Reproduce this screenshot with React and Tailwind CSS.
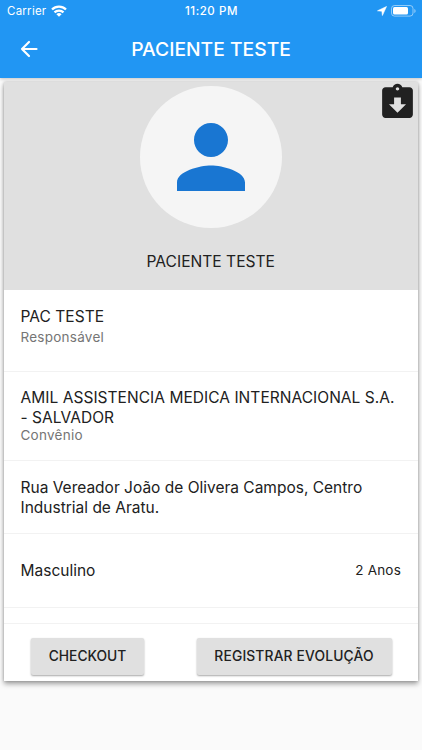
import React from "react";

function StatusBar() {
  return (
    <div className="flex h-[22px] items-center justify-between pl-[7px] pr-[6px] text-[11.5px] leading-[22px]">
      <div className="flex w-[120px] items-center gap-[5px]">
        <span className="tracking-[0.25px]">Carrier</span>
        <svg width="16" height="12" viewBox="0 0 16 12" fill="none" stroke="currentColor" strokeWidth="2.3">
          <path d="M1 4.5a10 10 0 0 1 14 0" />
          <path d="M3.5 7.4a6.4 6.4 0 0 1 9 0" />
          <path d="M8 11.8 5.4 9.3a3.7 3.7 0 0 1 5.2 0Z" fill="currentColor" stroke="none" />
        </svg>
      </div>
      <span className="font-medium tracking-[0.55px]">11:20 PM</span>
      <div className="flex w-[120px] items-center justify-end gap-[4px]">
        <svg width="10" height="10" viewBox="0 0 10 10" fill="currentColor" stroke="currentColor" strokeWidth="0.6" strokeLinejoin="round">
          <path d="M9.500.500 5.400 9.500 4.900 5.200.500 4.800Z" />
        </svg>
        <svg width="25" height="12" viewBox="0 0 25 12" fill="none">
          <rect x="0.5" y="0.5" width="21.5" height="10.6" rx="3" stroke="#fff" strokeOpacity="0.5" />
          <rect x="2" y="2" width="15" height="7.6" rx="1.5" fill="#fff" />
          <path d="M23.3 4v4c.8-.4 1.3-1.1 1.3-2s-.5-1.600-1.300-2Z" fill="#fff" fillOpacity="0.5" />
        </svg>
      </div>
    </div>
  );
}

function AppBar() {
  return (
    <header className="relative z-10 h-[77.5px] shrink-0 bg-[#2196f3] text-white shadow-[0_1px_3px_rgba(0,0,0,0.22)]">
      <StatusBar />
      <div className="grid h-[54px] grid-cols-[56px_1fr_56px] items-center">
        <svg className="ml-[17px]" width="24" height="24" viewBox="0 0 24 24" fill="none" stroke="#fff" strokeWidth="2.200" strokeLinecap="round" strokeLinejoin="round">
          <path d="M19.500 12H5M12 5l-7 7 7 7" />
        </svg>
        <h1 className="whitespace-nowrap text-center text-[19.300px] font-medium">PACIENTE TESTE</h1>
      </div>
    </header>
  );
}

function Profile() {
  return (
    <section className="relative flex h-[208px] flex-col items-center bg-[#e0e0e0] pt-[4px]">
      <div className="flex size-[142px] items-center justify-center rounded-full bg-[#f5f5f5]">
        <svg width="102" height="102" viewBox="0 0 24 24" fill="#1976d2">
          <path d="M12 12c2.210 0 4-1.790 4-4s-1.790-4-4-4-4 1.790-4 4 1.790 4 4 4zm0 2c-2.670 0-8 1.340-8 4v2h16v-2c0-2.660-5.330-4-8-4z" />
        </svg>
      </div>
      <p className="mt-[23px] text-[15.600px] leading-[22px]">PACIENTE TESTE</p>
      <svg className="absolute right-0 top-0" width="41" height="41" viewBox="0 0 24 24" fill="#212121">
        <path d="M19 3h-4.180C14.400 1.840 13.300 1 12 1c-1.300 0-2.400.840-2.820 2H5c-1.100 0-2 .900-2 2v14c0 1.100.900 2 2 2h14c1.100 0 2-.900 2-2V5c0-1.100-.900-2-2-2zm-7 0c.550 0 1 .450 1 1s-.450 1-1 1-1-.450-1-1 .450-1 1-1zm0 15l-5-5h3V9h4v4h3l-5 5z" />
      </svg>
    </section>
  );
}

export default function App() {
  return (
    <div className="flex h-[750px] w-[422px] flex-col overflow-hidden bg-[#fafafa] font-['Inter','Liberation_Sans',sans-serif] text-[#212121]">
      <AppBar />
      <main className="ml-[4px] mt-[4px] flex h-[599px] w-[413.5px] flex-col bg-white shadow-[0_3px_5px_rgba(0,0,0,0.35),0_0_3px_rgba(0,0,0,0.2)]">
        <Profile />
        <section className="h-[82px] border-b border-[#f2f2f2] px-[16.500px] pt-[17px]">
          <p className="text-[15.500px] leading-[20px] tracking-[0.04px]">PAC TESTE</p>
          <p className="mt-[1px] text-[13.500px] leading-[18px] tracking-[0.25px] text-[#757575]">Responsável</p>
        </section>
        <section className="h-[89px] border-b border-[#f2f2f2] px-[16.500px] pt-[16.500px]">
          <p className="whitespace-nowrap text-[15.500px] leading-[19.500px] tracking-[0.04px]">AMIL ASSISTENCIA MEDICA INTERNACIONAL S.A.<br />- SALVADOR</p>
          <p className="text-[13.500px] leading-[16px] tracking-[0.25px] text-[#757575]">Convênio</p>
        </section>
        <section className="h-[73px] border-b border-[#f2f2f2] px-[16.500px] pt-[17.500px]">
          <p className="whitespace-nowrap text-[15.500px] leading-[19.500px]">Rua Vereador João de Olivera Campos, Centro<br />Industrial de Aratu.</p>
        </section>
        <section className="flex h-[74px] items-center justify-between border-b border-[#f2f2f2] px-[16.500px] pt-[1px]">
          <span className="text-[15.500px]">Masculino</span>
          <span className="text-[13.500px] tracking-[0.2px]">2 Anos</span>
        </section>
        <div className="h-[16px] border-b border-[#f2f2f2]" />
        <footer className="flex justify-between pl-[27px] pr-[26px] pt-[14px] text-[13.800px] font-medium">
          <button className="h-[37px] w-[113px] rounded-[2px] bg-[#e0e0e0] shadow-[0_1px_2px_rgba(0,0,0,0.35)]"><span>CHECKOUT</span></button>
          <button className="h-[37px] w-[195px] whitespace-nowrap rounded-[2px] bg-[#e0e0e0] shadow-[0_1px_2px_rgba(0,0,0,0.35)]"><span className="tracking-[0.160px]">REGISTRAR EVOLUÇÃO</span></button>
        </footer>
      </main>
    </div>
  );
}
